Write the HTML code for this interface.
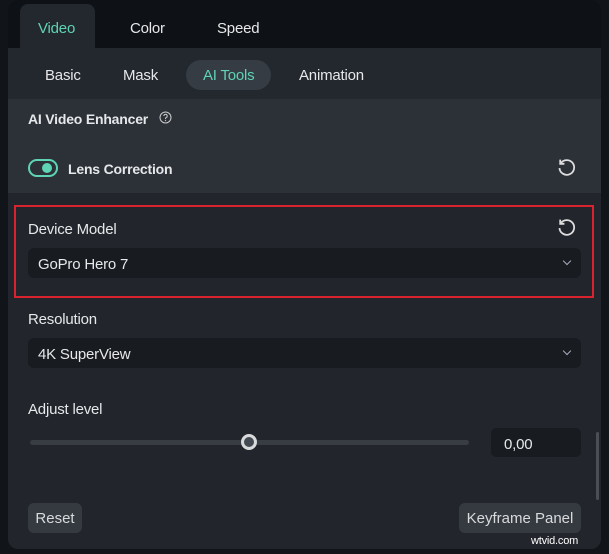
<!DOCTYPE html>
<html><head><style>
*{margin:0;padding:0;box-sizing:border-box}
body{width:609px;height:554px;background:#111418;font-family:"Liberation Sans",sans-serif;color:#e6e8ea;position:relative;overflow:hidden;font-size:15px}
.p{position:absolute}
.panel{left:8px;top:0;width:593px;height:549px;background:#22262c;border-radius:10px;overflow:hidden}
.top{left:8px;top:0;width:593px;height:48px;background:#0e1115;border-radius:10px 10px 0 0}
.t{position:absolute;font-size:15px;letter-spacing:-0.2px}
.sub{left:8px;top:48px;width:593px;height:51px;background:#23282e}
.sec{left:8px;top:99px;width:593px;height:94px;background:#2c3138}
.dd{background:#181b1f;border-radius:6px;height:30px;width:553px;left:28px}
.chev{position:absolute;right:11px;top:10px;width:6px;height:6px;border-right:1.5px solid #aab;border-bottom:1.5px solid #aab;transform:rotate(45deg)}
.btn{background:#353a41;border-radius:6px;height:30px;top:503px;color:#d8dadc;font-size:15px;line-height:32px;text-align:center}
</style></head><body>
<div class="p panel"></div>
<div class="p top"></div>
<div class="p" style="left:20px;top:4px;width:75px;height:48px;background:#23282e;border-radius:8px 8px 0 0"></div>
<div class="t" style="left:38px;top:20px;color:#5fd4b4">Video</div>
<div class="t" style="left:130px;top:20px">Color</div>
<div class="t" style="left:217px;top:20px">Speed</div>
<div class="p sub"></div>
<div class="p" style="left:186px;top:60px;width:85px;height:30px;background:#353c43;border-radius:15px"></div>
<div class="t" style="left:45px;top:67px">Basic</div>
<div class="t" style="left:123px;top:67px">Mask</div>
<div class="t" style="left:203px;top:67px;color:#5fd4b4">AI Tools</div>
<div class="t" style="left:299px;top:67px">Animation</div>
<div class="p sec"></div>
<div class="t" style="left:28px;top:111px;font-weight:bold;font-size:14px">AI Video Enhancer</div>
<svg class="p" style="left:159px;top:111px" width="13" height="13" viewBox="0 0 13 13"><circle cx="6.5" cy="6.5" r="5.5" fill="none" stroke="#ccc" stroke-width="1"/><path d="M4.8 5a1.7 1.7 0 1 1 2.3 1.6c-.5.2-.6.5-.6 1v.5" fill="none" stroke="#ccc" stroke-width="1"/><circle cx="6.5" cy="9.6" r=".6" fill="#ccc"/></svg>
<div class="p" style="left:28px;top:159px;width:30px;height:18px;border:2px solid #5fd4b4;border-radius:9px"></div>
<div class="p" style="left:42px;top:163px;width:10px;height:10px;background:#5fd4b4;border-radius:50%"></div>
<div class="t" style="left:68px;top:161px;font-weight:bold;font-size:14px">Lens Correction</div>
<svg class="p" style="left:556px;top:157px" width="21" height="21" viewBox="0 0 20 20"><path d="M4.5 6A7 7 0 1 1 3.3 10.5" fill="none" stroke="#ddd" stroke-width="1.7"/><path d="M4 2.5v4h4" fill="none" stroke="#ddd" stroke-width="1.7"/></svg>
<div class="p" style="left:14px;top:205px;width:580px;height:93px;border:2px solid #d9232e"></div>
<div class="t" style="left:28px;top:221px">Device Model</div>
<svg class="p" style="left:556px;top:217px" width="21" height="21" viewBox="0 0 20 20"><path d="M4.5 6A7 7 0 1 1 3.3 10.5" fill="none" stroke="#ddd" stroke-width="1.7"/><path d="M4 2.5v4h4" fill="none" stroke="#ddd" stroke-width="1.7"/></svg>
<div class="p dd" style="top:248px"><span class="t" style="left:10px;top:8px">GoPro Hero 7</span><div class="chev"></div></div>
<div class="t" style="left:28px;top:311px">Resolution</div>
<div class="p dd" style="top:338px"><span class="t" style="left:10px;top:8px">4K SuperView</span><div class="chev"></div></div>
<div class="t" style="left:28px;top:401px">Adjust level</div>
<div class="p" style="left:30px;top:440px;width:439px;height:5px;background:#383d44;border-radius:3px"></div>
<div class="p" style="left:241px;top:434px;width:16px;height:16px;border:3px solid #d8dadc;background:#444a52;border-radius:50%"></div>
<div class="p" style="left:491px;top:428px;width:90px;height:29px;background:#181b1f;border-radius:5px"></div>
<div class="t" style="left:504px;top:436px">0,00</div>
<div class="p" style="left:596px;top:432px;width:3px;height:68px;background:#4a4f56;border-radius:2px"></div>
<div class="p btn" style="left:28px;width:54px">Reset</div>
<div class="p btn" style="left:459px;width:122px">Keyframe Panel</div>
<div class="t" style="left:531px;top:535px;font-size:11px;color:#fff">wtvid.com</div>
</body></html>
